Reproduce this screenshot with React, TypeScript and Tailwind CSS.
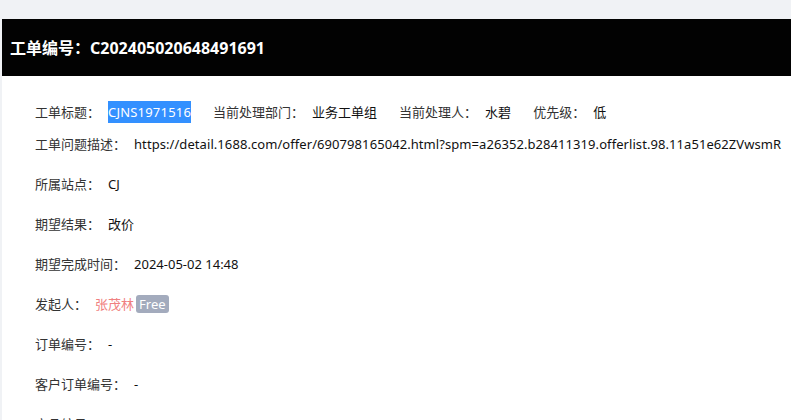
const FONT = '"Noto Sans", "Noto Sans CJK SC", sans-serif';

function Field({ label, children, last }: { label: string; children: React.ReactNode; last?: boolean }) {
  return (
    <span className={last ? "inline-flex items-center" : "inline-flex items-center mr-[22px]"}>
      <span className="text-[#333]">{label}</span>
      <span className="ml-2 text-[#111] flex items-center">{children}</span>
    </span>
  );
}

export default function App() {
  const rows: { label: string; value: React.ReactNode }[] = [
    { label: "所属站点：", value: "CJ" },
    { label: "期望结果：", value: "改价" },
    { label: "期望完成时间：", value: "2024-05-02 14:48" },
    {
      label: "发起人：",
      value: (
        <>
          <span className="text-[#f08080]">张茂林</span>
          <span className="ml-[2px] px-[3px] rounded-[3px] bg-[#a3abbd] text-white leading-[18px]">Free</span>
        </>
      ),
    },
    { label: "订单编号：", value: "-" },
    { label: "客户订单编号：", value: "-" },
    { label: "商品编号：", value: "-" },
  ];

  return (
    <div className="w-[791px] h-[420px] overflow-hidden bg-[#f0f2f5] pt-[19px] pl-[2px]" style={{ fontFamily: FONT }}>
      <div className="bg-white h-full">
        {/* Header */}
        <div className="h-[57px] bg-[#020202] flex items-center pl-2">
          <h2 className="text-white text-base font-bold whitespace-nowrap">工单编号：C202405020648491691</h2>
        </div>

        {/* Details */}
        <div className="pt-[25px] pl-[33px] text-[13px] leading-[22px] whitespace-nowrap">
          <div className="flex items-center">
            <Field label="工单标题：">
              <span className="bg-[#3390ff] text-white tracking-[0.2px]">CJNS1971516</span>
            </Field>
            <Field label="当前处理部门：">业务工单组</Field>
            <Field label="当前处理人：">水碧</Field>
            <Field label="优先级：" last>低</Field>
          </div>
          <div className="mt-[10px] flex items-center">
            <Field label="工单问题描述：" last>
              <span className="tracking-[0.07px]">
                https://detail.1688.com/offer/690798165042.html?spm=a26352.b28411319.offerlist.98.11a51e62ZVwsmR
              </span>
            </Field>
          </div>
          <div className="flex flex-col gap-[18px] mt-[18px]">
            {rows.map((r) => (
              <div key={r.label} className="flex items-center">
                <Field label={r.label} last>{r.value}</Field>
              </div>
            ))}
          </div>
        </div>
      </div>
    </div>
  );
}
